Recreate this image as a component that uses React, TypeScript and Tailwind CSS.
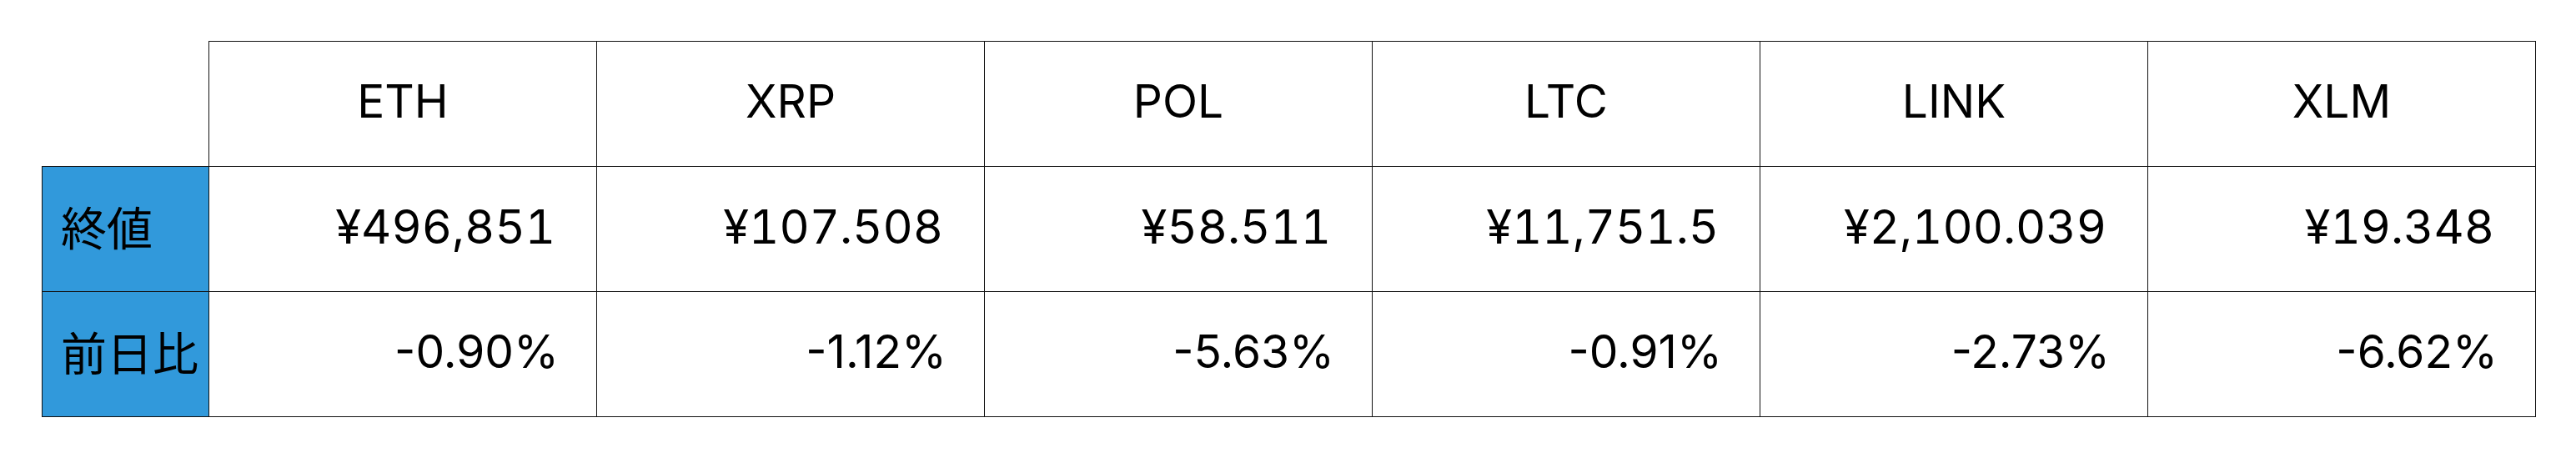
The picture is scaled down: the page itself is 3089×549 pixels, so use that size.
import React from "react";

const cols = ["ETH", "XRP", "POL", "LTC", "LINK", "XLM"];
const closes = ["¥496,851", "¥107.508", "¥58.511", "¥11,751.5", "¥2,100.039", "¥19.348"];
const changes = ["-0.90%", "-1.12%", "-5.63%", "-0.91%", "-2.73%", "-6.62%"];

export default function App() {
  const latin = { fontFamily: 'Inter, "Noto Sans CJK JP", sans-serif' };
  const cjk = { fontFamily: '"Noto Sans CJK JP", sans-serif' };
  return (
    <div className="w-[3089px] h-[549px] bg-white pt-[49px] pl-[50px]" style={latin}>
      <table className="border-collapse text-[56px] text-black leading-none">
        <tbody>
          <tr className="h-[150px]">
            <td className="w-[200px] p-0"></td>
            {cols.map((c) => (
              <td key={c} className="w-[465px] border border-[#111] text-center align-middle p-0 pb-[6px] text-[55px]">
                {c}
              </td>
            ))}
          </tr>
          <tr className="h-[150px]">
            <td className="w-[200px] border border-[#111] bg-[#3199db] pl-[22px] align-middle pb-[8px] text-[55px]" style={cjk}>
              終値
            </td>
            {closes.map((v) => (
              <td key={v} className="border border-[#111] text-right pr-[49px] align-middle pb-[6px] tabular-nums">
                {v}
              </td>
            ))}
          </tr>
          <tr className="h-[150px]">
            <td className="w-[200px] border border-[#111] bg-[#3199db] pl-[22px] align-middle pb-[8px] text-[55px]" style={cjk}>
              前日比
            </td>
            {changes.map((v) => (
              <td key={v} className="border border-[#111] text-right pr-[45px] align-middle pb-[6px] text-[55px]">
                {v}
              </td>
            ))}
          </tr>
        </tbody>
      </table>
    </div>
  );
}
